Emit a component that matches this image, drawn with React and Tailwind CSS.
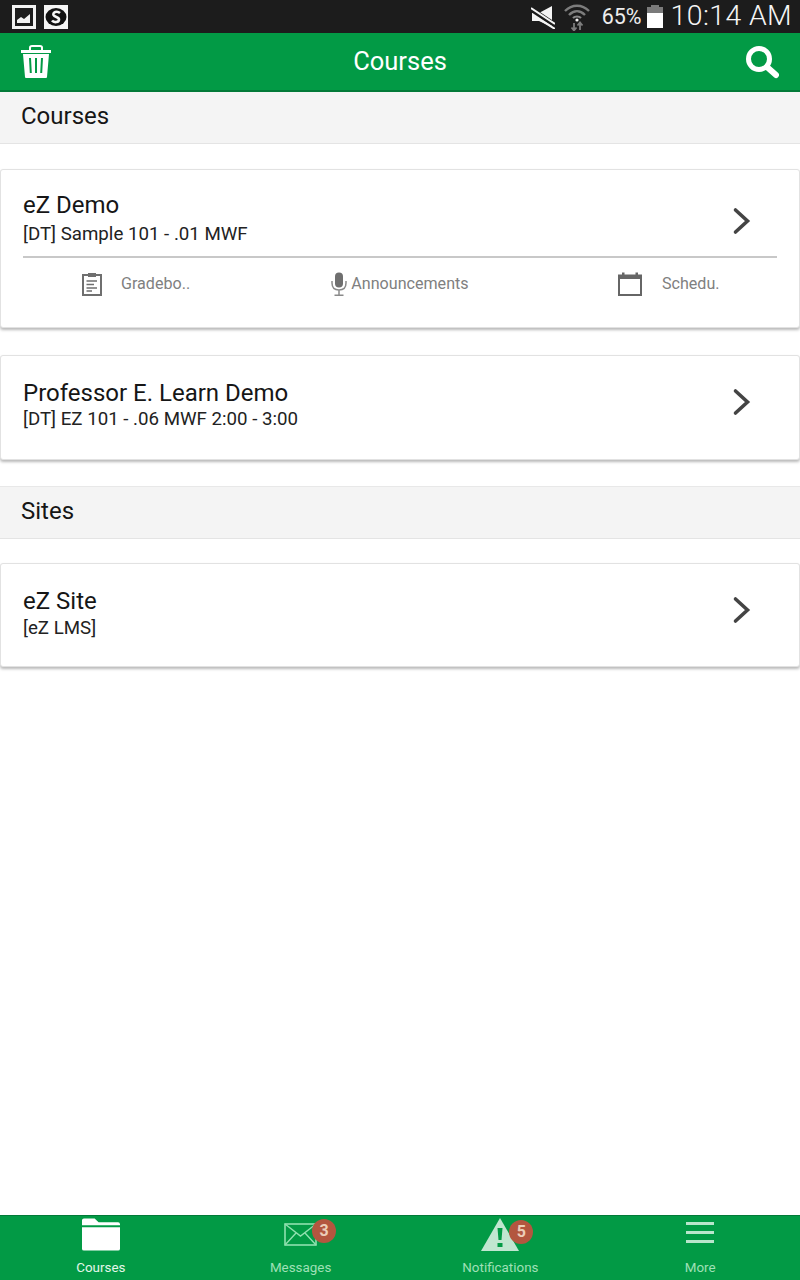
import React from "react";

const ChevronIcon = () => (
  <svg width="20" height="30" viewBox="0 0 20 30" fill="none" className="block">
    <path d="M3.5 4 L15.5 15 L3.5 26" stroke="#444444" strokeWidth="3.6" strokeLinecap="round" strokeLinejoin="miter" />
  </svg>
);

const Section = ({ children }) => (
  <div className="h-[52px] bg-[#f4f4f4] border-b border-[#e4e4e4] pl-[21px] flex items-center text-[24px] text-[#161616] leading-none pb-[3px]">
    {children}
  </div>
);

const CardHead = ({ title, sub, h, chevron, subClass }) => (
  <div className={`flex items-start justify-between pl-[22px] pr-[47px] ${h}`}>
    <div>
      <div className="text-[24px] leading-[28px] text-[#161616]">{title}</div>
      <div className={`text-[18.7px] leading-[26px] text-[#222222] ${subClass}`}>{sub}</div>
    </div>
    <div className={chevron}><ChevronIcon /></div>
  </div>
);

const Card = ({ children, className }) => (
  <div className={`bg-white rounded-[3px] border border-[#e2e2e2] shadow-[0_2px_3px_rgba(0,0,0,0.28)] ${className}`}>
    {children}
  </div>
);

const Tab = ({ label, active, icon, badge, badgeClass, className }) => (
  <div className={`flex-1 flex flex-col items-center relative ${className || ""}`}>
    <div className="h-[35px] flex items-end relative">
      {icon}
      {badge && (
        <div className={`absolute w-[24px] h-[24px] rounded-full bg-[#b3563f] text-[#eccdb8] text-[16px] font-bold flex items-center justify-center ${badgeClass}`}>
          {badge}
        </div>
      )}
    </div>
    <div className={`text-[13.4px] leading-none mt-[10px] ${active ? "text-[#e4f7ea]" : "text-[#9fe0b6]"}`}>{label}</div>
  </div>
);

export default function App() {
  return (
    <div className="w-[800px] h-[1280px] flex flex-col bg-white overflow-hidden font-['Roboto',sans-serif]">
      {/* status bar */}
      <div className="h-[33px] bg-[#1c1c1c] flex items-center pl-[12px] pr-[8px] text-white shrink-0">
        <svg width="24" height="24" viewBox="0 0 24 24" className="block">
          <rect width="24" height="24" fill="#f2f2f2" />
          <rect x="3" y="3" width="18" height="18" fill="#1c1c1c" />
          <path d="M5 18 L5 15 L9 12 L12 14 L18 9 L18 18 Z" fill="#f2f2f2" />
        </svg>
        <svg width="24" height="24" viewBox="0 0 24 24" className="block ml-[8px]">
          <rect width="24" height="24" fill="#f5f5f5" />
          <ellipse cx="12" cy="12" rx="10.5" ry="9" fill="#111111" />
          <path d="M16 8 C13 5.5 8.5 7 9.5 10 C10.5 12.5 15 11.5 15 14.5 C15 17.5 10 18 8 15.5" stroke="#f5f5f5" strokeWidth="2.6" fill="none" />
        </svg>
        <div className="flex-1" />
        <svg width="24" height="24" viewBox="0 0 24 24" className="block">
          <path d="M1 8 L8 8 L21 1 L21 22 L8 16 L1 16 Z" fill="#f5f5f5" />
          <path d="M0 4 L24 20" stroke="#1c1c1c" strokeWidth="5" />
          <path d="M0 3 L24 19 M3 11 L24 24" stroke="#f5f5f5" strokeWidth="2" />
        </svg>
        <svg width="26" height="28" viewBox="0 0 26 28" className="block ml-[9px]" fill="none">
          <path d="M1 8 C8 1 18 1 25 8" stroke="#7d7d7d" strokeWidth="2.4" />
          <path d="M5 12 C10 7 16 7 21 12" stroke="#7d7d7d" strokeWidth="2.4" />
          <path d="M9 15 C11 13 15 13 17 15" stroke="#8a8a8a" strokeWidth="2.2" />
          <circle cx="13" cy="17" r="1.6" fill="#f5f5f5" />
          <path d="M10 20 L10 27 M7.5 24.5 L10 27.5 L12.5 24.5 M16 27 L16 20 M13.5 22.5 L16 19.5 L18.5 22.5" stroke="#7d7d7d" strokeWidth="1.8" />
        </svg>
        <div className="ml-[12px] text-[21.5px] leading-none text-[#ededed]">65%</div>
        <div className="ml-[5px] w-[16px] h-[23px] flex flex-col items-center">
          <div className="w-[8px] h-[2px] bg-[#7a7a7a]" />
          <div className="w-[16px] h-[6px] bg-[#7a7a7a]" />
          <div className="w-[16px] h-[15px] bg-white" />
        </div>
        <div className="ml-[8px] text-[28.4px] leading-none tracking-[0.4px] text-[#f5f5f5] font-light">10:14 AM</div>
      </div>

      {/* app bar */}
      <div className="h-[59px] bg-[#029a45] border-b-2 border-[#027a38] flex items-center justify-between pl-[21px] pr-[21px] shrink-0 relative">
        <svg width="30" height="33" viewBox="0 0 30 33" className="block">
          <path d="M9 5 L9 2.5 Q9 1 11 1 L19 1 Q21 1 21 2.5 L21 5" stroke="#fff" strokeWidth="2" fill="none" />
          <rect x="0" y="5" width="30" height="3" fill="#fff" />
          <path d="M2 9 L28 9 L26 32 Q26 33 25 33 L5 33 Q4 33 4 32 Z" fill="#fff" />
          <path d="M9 13 L9.8 28 M15 13 L15 28 M21 13 L20.2 28" stroke="#029a45" strokeWidth="2" />
        </svg>
        <div className="absolute left-0 right-0 text-center text-white text-[25.5px] leading-none pointer-events-none">Courses</div>
        <svg width="34" height="34" viewBox="0 0 34 34" fill="none" className="block">
          <circle cx="14" cy="14" r="10.5" stroke="#fff" strokeWidth="5" />
          <path d="M22 22 L31 30" stroke="#fff" strokeWidth="6" strokeLinecap="round" />
        </svg>
      </div>

      {/* content */}
      <div className="flex-1 flex flex-col">
        <Section>Courses</Section>

        <Card className="mt-[25px] h-[159px]">
          <CardHead title="eZ Demo" sub="[DT] Sample 101 - .01 MWF" h="pt-[21px]" chevron="pt-[15px]" subClass="mt-[2px]" />
          <div className="mx-[22px] mt-[9px] h-[2px] bg-[#c8c8c8]" />
          <div className="flex mt-[14px] text-[16.1px] text-[#808080] leading-none">
            <div className="w-1/3 flex items-center pl-[80px]">
              <svg width="22" height="24" viewBox="0 0 22 24" fill="none" className="block">
                <rect x="2" y="3" width="18" height="20" stroke="#6f6f6f" strokeWidth="2" />
                <rect x="7" y="1" width="8" height="4" fill="#6f6f6f" />
                <path d="M5.5 9 H16 M5.5 12.5 H13 M5.5 16 H16 M5.5 19 H11" stroke="#6f6f6f" strokeWidth="1.6" />
              </svg>
              <span className="ml-[18px]">Gradebo..</span>
            </div>
            <div className="w-1/3 flex items-center justify-center">
              <svg width="16" height="24" viewBox="0 0 16 24" fill="none" className="block">
                <rect x="4" y="0.5" width="8" height="15" rx="4" fill="#6f6f6f" />
                <path d="M1 9 V11 Q1 18 8 18 Q15 18 15 11 V9 M8 18 V23 M3.5 23.2 H12.5" stroke="#8a8a8a" strokeWidth="1.5" />
              </svg>
              <span className="ml-[4px]">Announcements</span>
            </div>
            <div className="w-1/3 flex items-center pl-[85px]">
              <svg width="24" height="24" viewBox="0 0 24 24" fill="none" className="block">
                <rect x="1" y="3.5" width="22" height="19.5" stroke="#666666" strokeWidth="2" />
                <rect x="1" y="3" width="22" height="4" fill="#666666" />
                <rect x="4" y="0.5" width="2.5" height="4" fill="#666666" />
                <rect x="17.5" y="0.5" width="2.5" height="4" fill="#666666" />
              </svg>
              <span className="ml-[20px]">Schedu.</span>
            </div>
          </div>
        </Card>

        <Card className="mt-[27px] h-[105px]">
          <CardHead title="Professor E. Learn Demo" sub="[DT] EZ 101 - .06 MWF 2:00 - 3:00" h="pt-[23px]" chevron="pt-[8px]" subClass="-mt-[1px]" />
        </Card>

        <div className="mt-[26px] border-t border-[#e8e8e8]">
          <Section>Sites</Section>
        </div>

        <Card className="mt-[24px] h-[104px]">
          <CardHead title="eZ Site" sub="[eZ LMS]" h="pt-[23px]" chevron="pt-[8px]" />
        </Card>
      </div>

      {/* tab bar */}
      <div className="h-[65px] bg-[#029a45] border-t border-[#027a38] flex shrink-0">
        <Tab
          label="Courses"
          active
          className="pl-[1px]"
          icon={
            <svg width="38" height="33" viewBox="0 0 39 33" className="block">
              <path d="M0 6 V2 Q0 0 2 0 L13 0 L17 4 L37 4 Q39 4 39 6 V7 H0 Z" fill="#fff" />
              <path d="M0 9 H39 V31 Q39 33 37 33 H2 Q0 33 0 31 Z" fill="#fff" />
            </svg>
          }
        />
        <Tab
          label="Messages"
          icon={
            <svg width="33" height="23" viewBox="0 0 33 23" fill="none" className="block mb-[5px]">
              <rect x="1" y="1" width="31" height="21" stroke="#8fe0ae" strokeWidth="1.6" />
              <path d="M1 1 L16.5 13 L32 1 M1 22 L12 10 M32 22 L21 10" stroke="#8fe0ae" strokeWidth="1.4" />
            </svg>
          }
          badge="3"
          badgeClass="left-[28px] top-[3px]"
        />
        <Tab
          label="Notifications"
          icon={
            <svg width="38" height="33" viewBox="0 0 38 33" className="block">
              <path d="M19 0 L38 33 H0 Z" fill="#c0e6d0" />
              <path d="M16.5 10 H21.5 L20.5 22 H17.5 Z M16.5 25 H21.5 V29 H16.5 Z" fill="#029a45" />
            </svg>
          }
          badge="5"
          badgeClass="left-[28px] top-[4px]"
        />
        <Tab
          label="More"
          icon={
            <svg width="28" height="23" viewBox="0 0 28 23" className="block mb-[6px]">
              <rect y="0" width="28" height="3" fill="#b9e6cb" />
              <rect y="9" width="28" height="3" fill="#b9e6cb" />
              <rect y="18" width="28" height="3" fill="#b9e6cb" />
            </svg>
          }
        />
      </div>
    </div>
  );
}
